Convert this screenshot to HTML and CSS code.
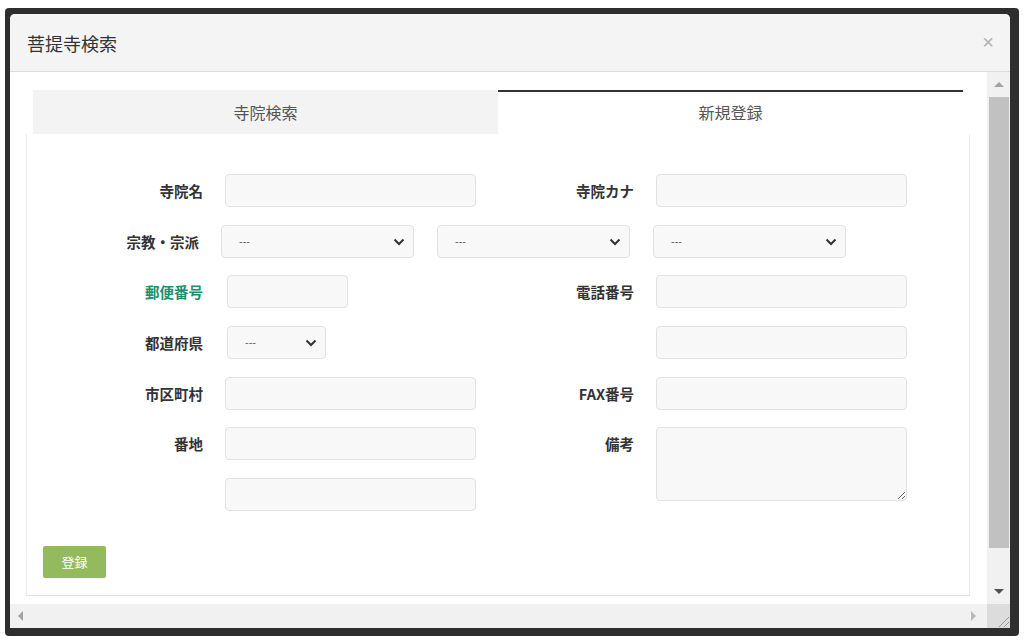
FILE: index.html
```html
<!DOCTYPE html>
<html lang="ja">
<head>
    <meta charset="utf-8">
    <title>菩提寺検索</title>
    <link rel="stylesheet" href="styles.css">
</head>
<body>
    <div class="window">
        <div class="dialog">
            <div class="dialog-header">
                <span class="dialog-title">菩提寺検索</span>
                <span class="dialog-close">×</span>
            </div>
            <div class="dialog-body">
                <div class="scroll-content">
                    <div class="tabs">
                        <div class="tab">寺院検索</div>
                        <div class="tab active">新規登録</div>
                    </div>
                    <div class="tab-panel">
                        <form class="entry-form">
                            <label class="form-label">寺院名</label>
                            <input class="form-input" type="text">
                            <label class="form-label">寺院カナ</label>
                            <input class="form-input" type="text">

                            <div class="religion-row">
                                <label class="form-label religion-label">宗教・宗派</label>
                                <div class="select-wrap religion-select">
                                    <select class="form-select"><option>---</option></select>
                                    <svg class="chevron" width="12" height="8" viewBox="0 0 12 8"><polyline points="1.5,1.5 6,6 10.5,1.5" fill="none" stroke="#333" stroke-width="2"/></svg>
                                </div>
                                <div class="select-wrap religion-select">
                                    <select class="form-select"><option>---</option></select>
                                    <svg class="chevron" width="12" height="8" viewBox="0 0 12 8"><polyline points="1.5,1.5 6,6 10.5,1.5" fill="none" stroke="#333" stroke-width="2"/></svg>
                                </div>
                                <div class="select-wrap religion-select">
                                    <select class="form-select"><option>---</option></select>
                                    <svg class="chevron" width="12" height="8" viewBox="0 0 12 8"><polyline points="1.5,1.5 6,6 10.5,1.5" fill="none" stroke="#333" stroke-width="2"/></svg>
                                </div>
                            </div>

                            <label class="form-label link-label">郵便番号</label>
                            <input class="form-input zip-input" type="text">
                            <label class="form-label">電話番号</label>
                            <input class="form-input" type="text">

                            <label class="form-label">都道府県</label>
                            <div class="select-wrap pref-select">
                                <select class="form-select"><option>---</option></select>
                                <svg class="chevron" width="12" height="8" viewBox="0 0 12 8"><polyline points="1.5,1.5 6,6 10.5,1.5" fill="none" stroke="#333" stroke-width="2"/></svg>
                            </div>
                            <span></span>
                            <input class="form-input" type="text">

                            <label class="form-label">市区町村</label>
                            <input class="form-input" type="text">
                            <label class="form-label">FAX番号</label>
                            <input class="form-input" type="text">

                            <label class="form-label">番地</label>
                            <input class="form-input" type="text">
                            <label class="form-label">備考</label>
                            <textarea class="form-input memo"></textarea>

                            <span class="addr2-spacer"></span>
                            <input class="form-input addr2" type="text">
                        </form>
                        <button class="btn-submit" type="button">登録</button>
                    </div>
                </div>
                <div class="vscroll">
                    <div class="scroll-btn"><span class="arrow-up"></span></div>
                    <div class="vthumb"></div>
                    <div class="vspace"></div>
                    <div class="scroll-btn"><span class="arrow-down"></span></div>
                </div>
                <div class="hscroll">
                    <span class="arrow-left"></span>
                    <span class="arrow-right"></span>
                </div>
                <div class="scroll-corner">
                    <svg width="14" height="14" viewBox="0 0 14 14"><path d="M13 3 L3 13 M13 8 L8 13" stroke="#9a9a9a" stroke-width="1" fill="none"/></svg>
                </div>
            </div>
        </div>
    </div>
</body>
</html>
```

FILE: styles.css
```css
body {
    margin: 0;
    background-color: #fff;
    font-family: "Noto Sans CJK JP", "Noto Sans", sans-serif;
    color: #333;
}

/* Window frame */
.window {
    box-sizing: border-box;
    width: 1014px;
    height: 628px;
    margin: 8px 0 0 5px;
    padding: 6px 9px 8px 5px;
    background-color: #2e2e2e;
    border-radius: 4px;
}

.dialog {
    height: 100%;
    display: flex;
    flex-direction: column;
    background-color: #fff;
    border-radius: 5px 5px 0 0;
    overflow: hidden;
}

.dialog-header {
    height: 57px;
    flex: none;
    display: flex;
    align-items: center;
    justify-content: space-between;
    padding: 0 16px 0 17px;
    background-color: #f4f4f4;
    border-bottom: 1px solid #dcdcdc;
}

.dialog-title {
    font-size: 18px;
    color: #333;
}

.dialog-close {
    font-family: "Liberation Sans", sans-serif;
    font-size: 20px;
    color: #b0b0b0;
}

.dialog-body {
    flex: 1;
    display: grid;
    grid-template-columns: 1fr 23px;
    grid-template-rows: 1fr 24px;
}

.scroll-content {
    padding: 18px 17px 0 16px;
}

/* Tabs */
.tabs {
    display: flex;
    margin: 0 7px;
    height: 44px;
}

.tab {
    flex: 1;
    display: flex;
    align-items: center;
    justify-content: center;
    font-size: 16px;
    color: #555;
    background-color: #f3f3f3;
}

.tab.active {
    background-color: #fff;
    border-top: 2px solid #333;
    padding-bottom: 2px;
}

.tab-panel {
    height: 462px;
    box-sizing: border-box;
    padding: 40px 0 0 16px;
    border: 1px solid #ececec;
    border-top: none;
    border-bottom-color: #e0e0e0;
}

/* Form */
.entry-form {
    display: grid;
    grid-template-columns: 150px 251px 136px 251px;
    grid-auto-rows: 33px;
    column-gap: 22px;
    row-gap: 17.67px;
    margin-left: 10px;
}

.form-label {
    align-self: center;
    text-align: right;
    font-size: 14.5px;
    font-weight: bold;
    color: #333;
}

.link-label {
    color: #1f8f6f;
}

.form-input {
    box-sizing: border-box;
    width: 100%;
    height: 33px;
    margin: 0;
    background-color: #f8f8f8;
    border: 1px solid #e2e2e2;
    border-radius: 4px;
}

.zip-input {
    width: 121px;
    margin-left: 2px;
}

.memo {
    grid-row: span 2;
    height: 74px;
    align-self: start;
    resize: both;
}

.religion-row {
    grid-column: 1 / -1;
    display: flex;
    gap: 23px;
}

.religion-label {
    width: 146px;
    margin-right: -1px;
}

.select-wrap {
    position: relative;
    height: 33px;
}

.religion-select {
    width: 193px;
}

.pref-select {
    width: 99px;
    margin-left: 2px;
}

.form-select {
    box-sizing: border-box;
    width: 100%;
    height: 33px;
    padding: 0 0 0 17px;
    appearance: none;
    -webkit-appearance: none;
    background-color: #f8f8f8;
    border: 1px solid #e2e2e2;
    border-radius: 4px;
    font-family: "Liberation Sans", sans-serif;
    font-size: 11px;
    color: #666;
}

.chevron {
    position: absolute;
    right: 9px;
    top: 13px;
    pointer-events: none;
}

.btn-submit {
    margin-top: 35px;
    width: 63px;
    height: 32px;
    border: none;
    border-radius: 2px;
    background-color: #93bb5d;
    color: #fff;
    font-family: "Noto Sans CJK JP", sans-serif;
    font-size: 13px;
}

/* Fake scrollbars */
.vscroll {
    display: flex;
    flex-direction: column;
    background-color: #f1f1f1;
}

.scroll-btn {
    height: 25px;
    display: flex;
    align-items: center;
    justify-content: center;
}

.arrow-up {
    border-left: 5px solid transparent;
    border-right: 5px solid transparent;
    border-bottom: 5px solid #a3a3a3;
}

.arrow-down {
    border-left: 5px solid transparent;
    border-right: 5px solid transparent;
    border-top: 5px solid #505050;
}

.vthumb {
    height: 451px;
    margin: 0 1px 0 2px;
    background-color: #c1c1c1;
}

.vspace {
    flex: 1;
}

.hscroll {
    display: flex;
    align-items: center;
    justify-content: space-between;
    padding: 0 11px 0 8px;
    background-color: #f1f1f1;
}

.arrow-left {
    border-top: 5px solid transparent;
    border-bottom: 5px solid transparent;
    border-right: 5px solid #a3a3a3;
}

.arrow-right {
    border-top: 5px solid transparent;
    border-bottom: 5px solid transparent;
    border-left: 5px solid #b8b8b8;
}

.scroll-corner {
    display: flex;
    align-items: flex-end;
    justify-content: flex-end;
    background-color: #dcdcdc;
}
```
